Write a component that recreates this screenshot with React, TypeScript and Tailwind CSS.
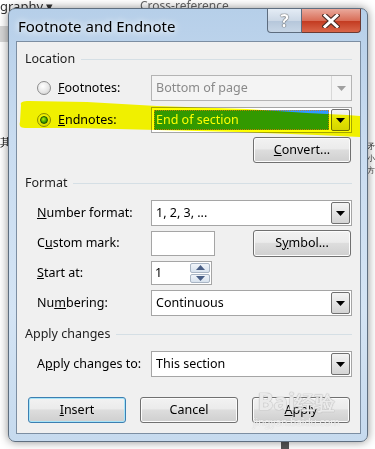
import React from "react";

const ui = "font-['Noto_Sans',sans-serif]";

function Arrow({ color = "#000" }: { color?: string }) {
    return (
        <svg width="9" height="5" viewBox="0 0 9 5">
            <path d="M0 0h9L4.5 5z" fill={color} />
        </svg>
    );
}

function Combo({
    value,
    disabled,
    selected,
}: {
    value: string;
    disabled?: boolean;
    selected?: boolean;
}) {
    return (
        <div
            className={`flex h-[26px] w-[201px] items-stretch border ${
                disabled ? "border-[#b4b4b4] bg-[#f4f4f4]" : "border-[#a5a5a5] bg-white"
            }`}
        >
            <div className="flex flex-1 items-center p-[2px]">
                {selected ? (
                    <div className="flex h-full w-full items-center border border-dotted border-[#c08040] bg-[#3399ff] pl-[1px] text-white">
                        {value}
                    </div>
                ) : (
                    <span className={`pl-[2px] ${disabled ? "text-[#8a8a8a]" : "text-black"}`}>
                        {value}
                    </span>
                )}
            </div>
            {disabled ? (
                <div className="flex w-[20px] items-center justify-center border-l border-[#d8d8d8]">
                    <Arrow color="#a0a0a0" />
                </div>
            ) : (
                <div className="m-[1px] ml-0 flex w-[19px] items-center justify-center rounded-[2px] border border-[#707070] bg-gradient-to-b from-[#f4f4f4] to-[#d4d4d4]">
                    <Arrow />
                </div>
            )}
        </div>
    );
}

function Btn({
    children,
    primary,
    h = "h-[26px]",
}: {
    children: React.ReactNode;
    primary?: boolean;
    h?: string;
}) {
    return (
        <div
            className={`flex ${h} w-[98px] items-center justify-center rounded-[3px] border ${
                primary
                    ? "border-[#3c7fb1] shadow-[inset_0_0_0_1px_#a8e4f8]"
                    : "border-[#707070] shadow-[inset_0_0_0_1px_#fcfcfc]"
            } bg-[linear-gradient(#f2f2f2,#ebebeb_45%,#dddddd_50%,#cfcfcf)] text-black`}
        >
            {children}
        </div>
    );
}

function Radio({ checked }: { checked?: boolean }) {
    return (
        <div className="flex h-[14px] w-[14px] items-center justify-center rounded-full border border-[#8c8c8c] bg-[radial-gradient(circle_at_40%_35%,#ffffff,#e6e6e6_55%,#c8c8c8)]">
            {checked && (
                <div className="h-[8px] w-[8px] rounded-full border border-[#1d4f0a] bg-[radial-gradient(circle_at_40%_35%,#b8f070,#3a9a10_60%,#1d5a05)]" />
            )}
        </div>
    );
}

function Section({ title }: { title: string }) {
    return (
        <div className="flex h-[16px] items-center gap-[6px] pl-[8px] pr-[8px] text-[#1e1e1e]">
            <span>{title}</span>
            <div className="h-px flex-1 bg-[#d5dfe5]" />
        </div>
    );
}

export default function App() {
    return (
        <div className={`relative h-[449px] w-[375px] overflow-hidden bg-white ${ui} text-[12.5px]`}>
            {/* things behind the dialog */}
            <div className="absolute left-0 top-0 text-[13px] leading-[13px] text-[#333]">graphy ▾</div>
            <div className="absolute left-[140px] top-0 text-[12px] leading-[12px] text-[#666]">Cross-reference</div>
            <div className="absolute left-0 top-[26px] h-[16px] w-[10px] bg-[#d6d6d6]" />
            <div className="absolute left-0 top-[134px] text-[11px] text-black">其</div>
            <div className="absolute right-0 top-[140px] flex flex-col text-[8px] leading-[12px] text-[#333]">
                <span>矛</span>
                <span>小</span>
                <span>方</span>
            </div>
            <div className="absolute bottom-0 left-[281px] h-[10px] w-[8px] bg-[#555]" />

            {/* dialog window */}
            <div className="absolute left-[8px] top-[8px] flex h-[434px] w-[360px] flex-col rounded-[7px] border border-[#5f6f80] bg-[linear-gradient(180deg,#b6cfe9,#c9dcf0_30%,#d4e4f4_70%,#c6daee)] pl-[7px] pr-[6px] pb-[7px] shadow-[0_0_10px_rgba(0,0,0,0.45)]">
                <div className="flex h-[32px] items-start justify-between">
                    <span className="pl-[2px] pt-[6px] text-[15px] text-black [text-shadow:0_0_6px_#fff,0_0_10px_#fff]">
                        Footnote and Endnote
                    </span>
                    <div className="flex h-[24px]">
                        <div className="flex w-[35px] items-center justify-center rounded-bl-[4px] border border-t-0 border-[#5d6c7e] bg-[linear-gradient(#e4ecf5,#ccd8e6_50%,#b5c6da_51%,#c7d6e6)] text-[17px] font-bold text-white [text-shadow:0_0_1px_#333,0_0_1px_#333]">
                            ?
                        </div>
                        <div className="flex w-[59px] items-center justify-center rounded-br-[4px] border border-l-0 border-t-0 border-[#6b3a33] bg-[linear-gradient(#eaa99c,#d96e58_50%,#c2391f_51%,#d9664a)]">
                            <svg width="18" height="14" viewBox="0 0 18 14">
                                <path
                                    d="M3 1.5 L15 12.5 M15 1.5 L3 12.5"
                                    stroke="#4a2b24"
                                    strokeWidth="5"
                                    strokeLinecap="square"
                                />
                                <path
                                    d="M3 1.5 L15 12.5 M15 1.5 L3 12.5"
                                    stroke="#fff"
                                    strokeWidth="3"
                                    strokeLinecap="square"
                                />
                            </svg>
                        </div>
                    </div>
                </div>

                {/* client area */}
                <div className="relative flex flex-1 flex-col border border-[#7c8ea2] bg-[#f0f0f0] pt-[9px]">
                    <Section title="Location" />

                    <div className="mt-[8px] flex items-center pl-[20px]">
                        <div className="flex w-[114px] items-center gap-[7px]">
                            <Radio />
                            <span>
                                <u>F</u>ootnotes:
                            </span>
                        </div>
                        <Combo value="Bottom of page" disabled />
                    </div>

                    <div className="mt-[6px] flex items-center pl-[20px]">
                        <div className="flex w-[114px] items-center gap-[7px]">
                            <Radio checked />
                            <span>
                                <u>E</u>ndnotes:
                            </span>
                        </div>
                        <Combo value="End of section" selected />
                    </div>

                    <div className="mt-[4px] flex justify-end pr-[9px]">
                        <Btn>
                            <span>
                                <u>C</u>onvert...
                            </span>
                        </Btn>
                    </div>

                    <div className="mt-[12px]">
                        <Section title="Format" />
                    </div>

                    <div className="mt-[9px] flex items-center pl-[20px]">
                        <span className="w-[114px]">
                            <u>N</u>umber format:
                        </span>
                        <Combo value="1, 2, 3, ..." />
                    </div>

                    <div className="mt-[4px] flex items-center pl-[20px] pr-[9px]">
                        <span className="w-[114px]">
                            C<u>u</u>stom mark:
                        </span>
                        <div className="h-[25px] w-[64px] border border-[#a5a5a5] bg-white" />
                        <div className="flex-1" />
                        <Btn h="h-[27px]">
                            <span>
                                S<u>y</u>mbol...
                            </span>
                        </Btn>
                    </div>

                    <div className="mt-[4px] flex items-center pl-[20px]">
                        <span className="w-[114px]">
                            <u>S</u>tart at:
                        </span>
                        <div className="flex h-[24px] w-[61px] items-stretch border border-[#a5a5a5] bg-white">
                            <span className="flex flex-1 items-center pl-[3px]">1</span>
                            <div className="my-[1px] mr-[1px] flex w-[20px] flex-col gap-px">
                                <div className="flex flex-1 items-center justify-center rounded-[2px] border border-[#a9b5c4] bg-[linear-gradient(#f0f4f9,#d8e2ee)]">
                                    <svg width="9" height="5" viewBox="0 0 9 5">
                                        <path d="M0 5h9L4.5 0z" fill="#4a5f86" />
                                    </svg>
                                </div>
                                <div className="flex flex-1 items-center justify-center rounded-[2px] border border-[#a9b5c4] bg-[linear-gradient(#f0f4f9,#d8e2ee)]">
                                    <Arrow color="#4a5f86" />
                                </div>
                            </div>
                        </div>
                    </div>

                    <div className="mt-[5px] flex items-center pl-[20px]">
                        <span className="w-[114px]">
                            Nu<u>m</u>bering:
                        </span>
                        <Combo value="Continuous" />
                    </div>

                    <div className="mt-[10px]">
                        <Section title="Apply changes" />
                    </div>

                    <div className="mt-[9px] flex items-center pl-[20px]">
                        <span className="w-[114px]">
                            A<u>p</u>ply changes to:
                        </span>
                        <Combo value="This section" />
                    </div>

                    <div className="mt-[20px] flex items-center gap-[14px] pl-[11px]">
                        <Btn primary>
                            <span>
                                <u>I</u>nsert
                            </span>
                        </Btn>
                        <Btn>
                            <span>Cancel</span>
                        </Btn>
                        <Btn>
                            <span>
                                <u>A</u>pply
                            </span>
                        </Btn>
                    </div>

                    {/* highlighter stroke */}
                    <svg
                        className="pointer-events-none absolute left-0 top-0 mix-blend-multiply"
                        width="345"
                        height="120"
                        viewBox="0 0 345 120"
                    >
                        <path
                            d="M4 63 C3 60 6 59 12 59 L70 60 L140 64 L230 67 L290 71 L330 73 L343 74 L343 95 L300 93 L220 90 L140 88 L60 86 L8 86 C3 86 2 83 3 80 Z"
                            fill="#ffff00"
                        />
                    </svg>

                    {/* watermark */}
                    <div className="pointer-events-none absolute left-[236px] top-[346px] flex flex-col items-center text-white/75">
                        <div className="flex items-baseline text-[24px] font-bold leading-[26px] [text-shadow:0_0_1px_#aaa,0_0_1px_#aaa]">
                            <span>Bai</span>
                            <span className="text-[20px]">经验</span>
                        </div>
                        <span className="text-[10px] leading-[12px] [text-shadow:0_0_1px_#bbb]">jingyan.baidu.com</span>
                    </div>
                </div>
            </div>
        </div>
    );
}
